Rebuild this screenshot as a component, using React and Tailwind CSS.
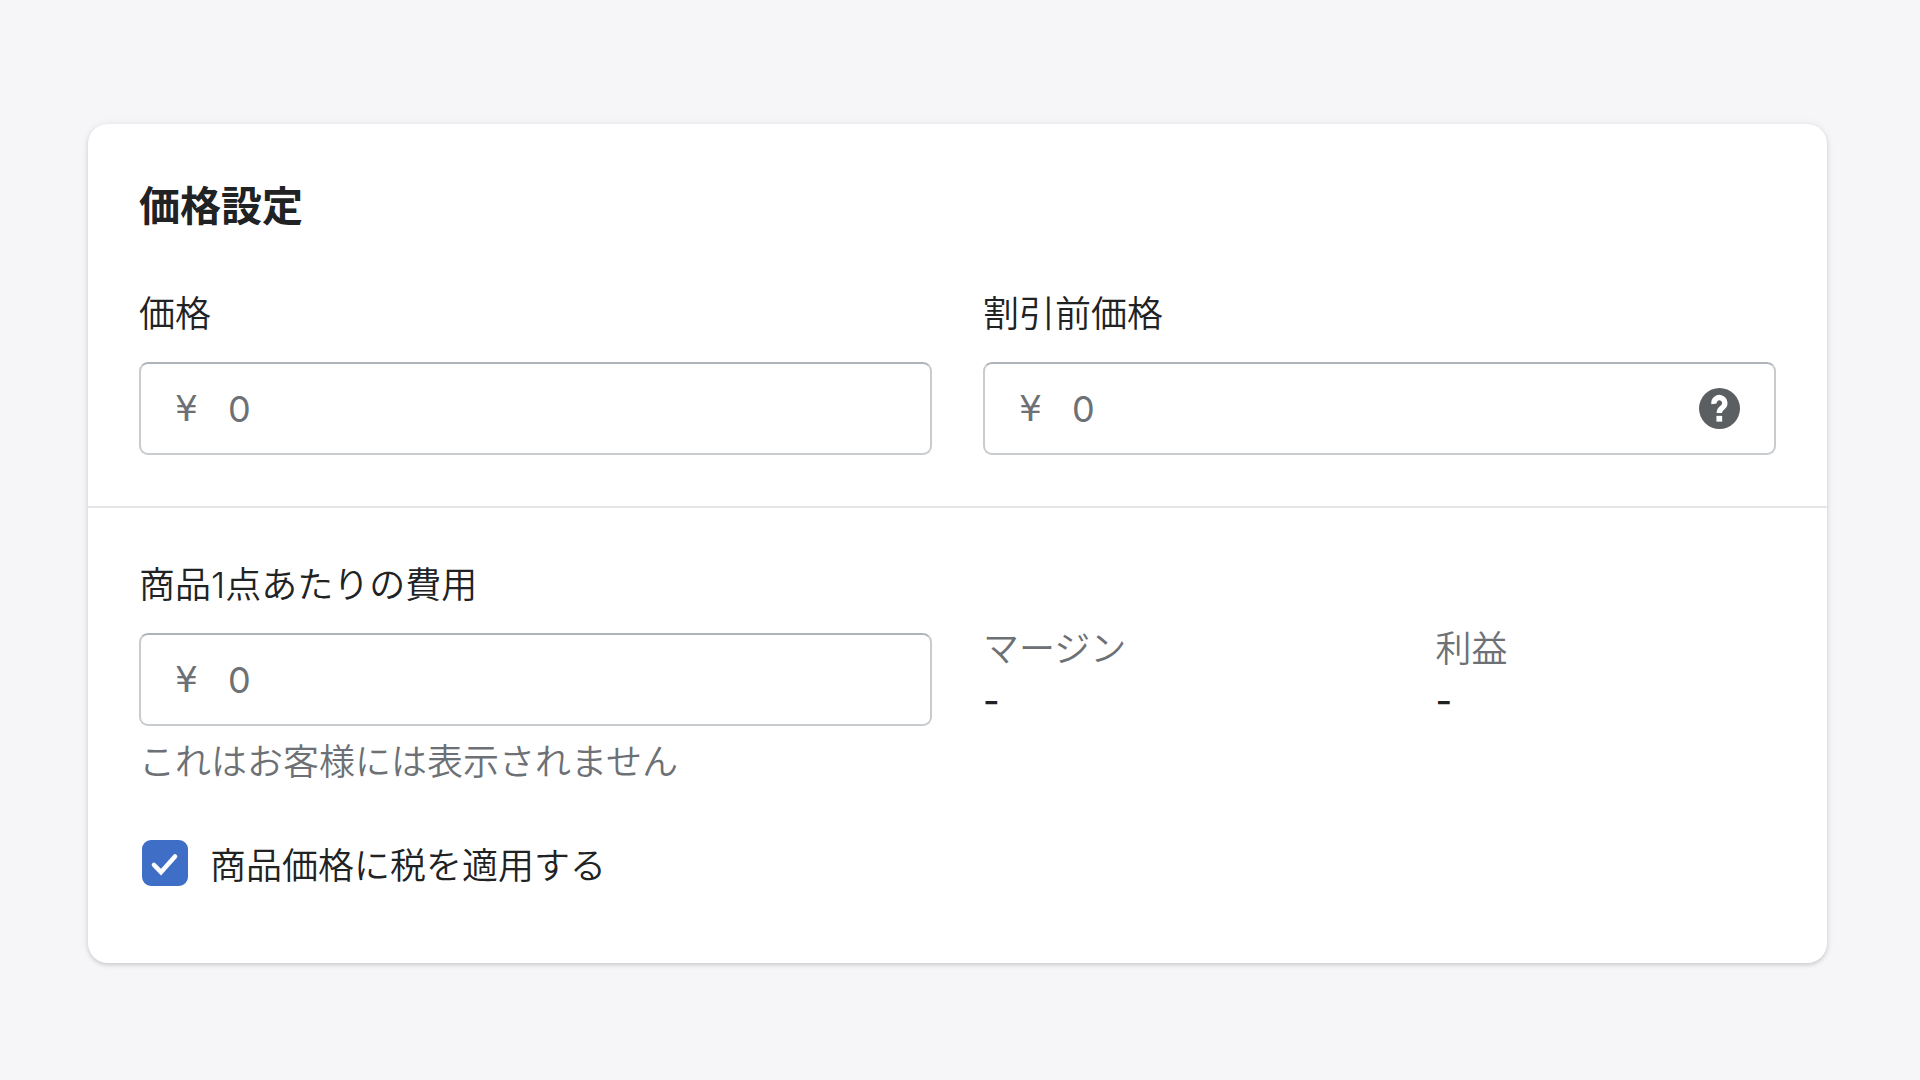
import { useState } from 'react';

const METRICS = [
  { label: 'マージン', value: '-' },
  { label: '利益', value: '-' },
];

function HelpIcon() {
  return (
    <svg viewBox="0 0 20 20" className="h-[41px] w-[41px]" aria-hidden="true">
      <circle cx="10" cy="10" r="10" fill="#5c5f62" />
      <path d="M7.3 7.7A2.65 2.65 0 1 1 11.7 9.3C10.6 10 9.9 10.4 9.9 12.2" fill="none" stroke="#fff" strokeWidth="2.6" />
      <path d="M8.5 13.6h2.8v2.8H8.5z" fill="#fff" />
    </svg>
  );
}

function MoneyField({ id, label, help, hint }) {
  const [value, setValue] = useState('');

  return (
    <div className="min-w-0 flex-1">
      <label htmlFor={id} className="mb-[22px] block">{label}</label>
      <div className="flex h-[93px] items-center rounded-[9px] border-2 border-[#c9cccf] border-t-[#aeb4b9] bg-white px-[34px] font-normal text-[#6d7175]">
        <span className="mr-[30px] font-['DejaVu_Sans',sans-serif]">¥</span>
        <input
          id={id}
          type="text"
          inputMode="numeric"
          placeholder="0"
          value={value}
          onChange={(e) => setValue(e.target.value)}
          className="min-w-0 flex-1 bg-transparent text-[#202223] outline-none placeholder:text-[#6d7175]"
        />
        {help && (
          <button type="button" aria-label={help} className="shrink-0 cursor-pointer">
            <HelpIcon />
          </button>
        )}
      </div>
      {hint && <p className="mt-[10px] text-[#6d7175]">{hint}</p>}
    </div>
  );
}

export default function App() {
  const [taxable, setTaxable] = useState(true);

  return (
    <main
      lang="ja"
      className="min-h-screen bg-[#f6f6f8] pt-[124px] pr-[93px] pb-[116px] pl-[88px] font-['Inter','Noto_Sans_CJK_JP',sans-serif] text-[36px] leading-[52px] font-[350] text-[#202223]"
    >
      <div className="rounded-[20px] bg-white shadow-[0_0_10px_rgba(23,24,24,0.06),0_2px_4px_rgba(0,0,0,0.15)]">
        {/* Price */}
        <section className="border-b-2 border-[#e4e5e7] p-[51px]">
          <h2 className="mb-[51px] text-[41px] leading-[62px] font-bold">価格設定</h2>
          <div className="flex gap-[51px]">
            <MoneyField id="price" label="価格" />
            <MoneyField id="compare-price" label="割引前価格" help="割引前価格" />
          </div>
        </section>

        {/* Cost per item */}
        <section className="px-[51px] pt-[51px] pb-[71px]">
          <div className="flex gap-[51px]">
            <MoneyField id="cost" label="商品1点あたりの費用" hint="これはお客様には表示されません" />
            <dl className="flex min-w-0 flex-1 gap-28 pt-16">
              {METRICS.map(({ label, value }) => (
                <div key={label} className="flex-1">
                  <dt className="text-[#6d7175]">{label}</dt>
                  <dd className="font-medium">{value}</dd>
                </div>
              ))}
            </dl>
          </div>

          <label className="mt-[52px] flex w-fit cursor-pointer items-start gap-[22px] pl-[3px]">
            <span className="grid h-[46px] w-[46px]">
              <input
                type="checkbox"
                checked={taxable}
                onChange={(e) => setTaxable(e.target.checked)}
                className="peer col-start-1 row-start-1 appearance-none rounded-[9px] border-2 border-[#8c9196] checked:border-[#3f6ec6] checked:bg-[#3f6ec6]"
              />
              <svg viewBox="0 0 46 46" className="pointer-events-none invisible col-start-1 row-start-1 peer-checked:visible" aria-hidden="true">
                <path d="M12 25l7 7.2L33 16.5" fill="none" stroke="#fff" strokeWidth="4.6" strokeLinecap="round" />
              </svg>
            </span>
            商品価格に税を適用する
          </label>
        </section>
      </div>
    </main>
  );
}
